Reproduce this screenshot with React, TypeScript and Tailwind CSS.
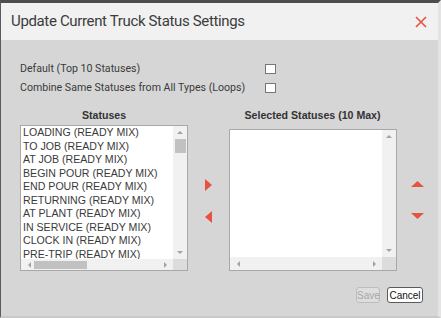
import React from "react";

const statuses = [
  "LOADING (READY MIX)",
  "TO JOB (READY MIX)",
  "AT JOB (READY MIX)",
  "BEGIN POUR (READY MIX)",
  "END POUR (READY MIX)",
  "RETURNING (READY MIX)",
  "AT PLANT (READY MIX)",
  "IN SERVICE (READY MIX)",
  "CLOCK IN (READY MIX)",
  "PRE-TRIP (READY MIX)",
];

function Tri({ dir, className }: { dir: "up" | "down" | "left" | "right"; className?: string }) {
  const pts = {
    up: "0,10 5,0 10,10",
    down: "0,0 10,0 5,10",
    left: "10,0 10,10 0,5",
    right: "0,0 10,5 0,10",
  }[dir];
  return (
    <svg viewBox="0 0 10 10" preserveAspectRatio="none" className={className}>
      <polygon points={pts} fill="currentColor" />
    </svg>
  );
}

type ListBoxProps = {
  items: string[];
  height: string;
  barHeight: string;
  withThumbs?: boolean;
};

function ListBox({ items, height, barHeight, withThumbs }: ListBoxProps) {
  return (
    <div className={`flex w-[168px] flex-col border border-[#a8a8a8] bg-white ${height}`}>
      <div className="flex min-h-0 flex-1">
        <div className="flex-1 overflow-hidden pl-[2px] font-['Liberation_Sans',Arial,sans-serif] text-[10.6px] leading-[13.55px] text-[#3a3a3a]">
          {items.map((s) => (
            <div key={s} className="whitespace-nowrap">
              {s}
            </div>
          ))}
        </div>
        <div className="flex w-[14px] flex-col items-center bg-[#f1f1f1] text-[#a3a3a3]">
          <Tri dir="up" className="mt-[5px] h-[3px] w-[6px]" />
          {withThumbs ? <div className="mt-[5px] h-[14px] w-[11px] bg-[#c1c1c1]" /> : null}
          <div className="flex-1" />
          <Tri dir="down" className="mb-[5px] h-[3px] w-[6px]" />
        </div>
      </div>
      <div className={`flex bg-[#f1f1f1] text-[#a3a3a3] ${barHeight}`}>
        <div className="flex flex-1 items-center">
          <Tri dir="left" className="ml-[7px] h-[6px] w-[3px]" />
          {withThumbs ? <div className="ml-[3px] h-[8px] w-[53px] bg-[#c1c1c1]" /> : null}
          <div className="flex-1" />
          <Tri dir="right" className="mr-[6px] h-[6px] w-[3px]" />
        </div>
        <div className="w-[14px] bg-[#dcdcdc]" />
      </div>
    </div>
  );
}

function CheckRow({ label }: { label: string }) {
  return (
    <div className="flex h-[19px] items-center">
      <span className="w-[245px] whitespace-nowrap">{label}</span>
      <span className="h-[10px] w-[11px] border border-[#767676] bg-white" />
    </div>
  );
}

export default function App() {
  return (
    <div className="flex h-[318px] w-[441px] flex-col overflow-hidden border-t-[3px] border-l border-r-[3px] border-b-[2px] border-t-[#4d4d4d] border-l-[#5a5a5a] border-r-[#e4e4e4] border-b-[#c9c9c9] bg-[#d6d6d6] font-['Roboto',sans-serif] text-[#333]">
      <div className="flex h-[37px] shrink-0 items-center justify-between bg-[#f0f1f0] pl-[10px] pr-[11px]">
        <h1 className="text-[15px] tracking-[-0.35px] text-[#3c3c3c]">Update Current Truck Status Settings</h1>
        <svg viewBox="0 0 12 12" className="h-[12px] w-[12px] text-[#e8523f]">
          <path d="M1 1 L11 11 M11 1 L1 11" stroke="currentColor" strokeWidth="1.6" />
        </svg>
      </div>

      <div className="flex flex-1 flex-col pl-[19px] text-[10.6px] text-[#3a3a3a]">
        <div className="mt-[19px]">
          <CheckRow label="Default (Top 10 Statuses)" />
          <CheckRow label="Combine Same Statuses from All Types (Loops)" />
        </div>

        <div className="mt-[11px] flex">
          <div className="flex flex-col items-center">
            <div className="h-[14px] font-['Liberation_Sans',Arial,sans-serif] text-[10.6px] font-bold leading-[14px] text-[#333]">
              Statuses
            </div>
            <div className="mt-[3px]">
              <ListBox items={statuses} height="h-[146px]" barHeight="h-[11px]" withThumbs />
            </div>
          </div>

          <div className="flex w-[43px] flex-col items-center justify-center gap-[20px] pt-[22px] text-[#e8523f]">
            <Tri dir="right" className="h-[12px] w-[7px]" />
            <Tri dir="left" className="h-[12px] w-[7px]" />
          </div>

          <div className="flex flex-col items-center">
            <div className="h-[14px] font-['Liberation_Sans',Arial,sans-serif] text-[10.6px] font-bold leading-[14px] text-[#333]">
              Selected Statuses (10 Max)
            </div>
            <div className="mt-[7px]">
              <ListBox items={[]} height="h-[142px]" barHeight="h-[13px]" />
            </div>
          </div>

          <div className="flex w-[44px] flex-col items-center justify-center gap-[26px] pt-[21px] text-[#e8523f]">
            <Tri dir="up" className="h-[6px] w-[13px]" />
            <Tri dir="down" className="h-[6px] w-[13px]" />
          </div>
        </div>

        <div className="mt-[16px] flex justify-end gap-[7px] pr-[15px] font-['Liberation_Sans',Arial,sans-serif] text-[10px]">
          <button className="h-[16px] w-[24px] rounded-[3px] border border-[#bdbdbd] bg-[#dedede] text-[#a8a8a8]">
            Save
          </button>
          <button className="h-[16px] w-[36px] rounded-[3px] border border-[#5a5a5a] bg-white text-[#111]">
            Cancel
          </button>
        </div>
      </div>
    </div>
  );
}
